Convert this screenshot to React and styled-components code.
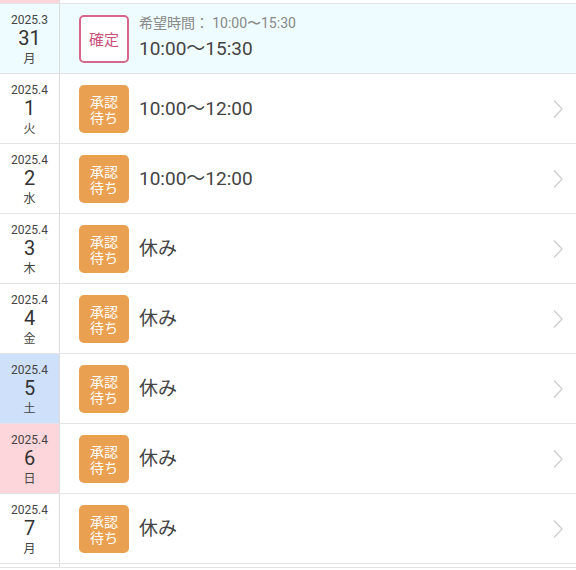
import React from "react";
import styled, { createGlobalStyle } from "styled-components";

const Global = createGlobalStyle`
  html, body { margin: 0; padding: 0; background: #fff; }
  body { font-family: Roboto, "Noto Sans CJK JP", sans-serif; color: #333; overflow: hidden; }
`;

const List = styled.div`
  display: flex;
  flex-direction: column;
  width: 576px;
  height: 570px;
  overflow: hidden;
`;

const Peek = styled.div`
  display: flex;
  height: 3px;
  border-bottom: 1px solid #e4e4e4;
  flex-shrink: 0;
`;

const PeekDate = styled.div`
  width: 59px;
  border-right: 1px solid #dcdcdc;
  background: ${(p) => p.$bg};
`;

const Row = styled.div`
  display: flex;
  height: 69px;
  border-bottom: 1px solid #e4e4e4;
  background: ${(p) => (p.$confirmed ? "#effcff" : "#fff")};
  flex-shrink: 0;
`;

const DateCell = styled.div`
  width: 59px;
  border-right: 1px solid #dcdcdc;
  background: ${(p) => p.$bg};
  display: flex;
  flex-direction: column;
  align-items: center;
  justify-content: center;
  flex-shrink: 0;
`;

const Ym = styled.div`
  font-size: 12px;
  line-height: 14px;
  color: #444;
`;

const Day = styled.div`
  font-size: 20px;
  line-height: 23px;
  color: #333;
`;

const Dow = styled.div`
  font-size: 12px;
  line-height: 15px;
  color: #444;
  font-family: "Noto Sans CJK JP", sans-serif;
`;

const Body = styled.div`
  flex: 1;
  display: flex;
  align-items: center;
  padding-left: 19px;
  padding-right: 12px;
  gap: 10px;
`;

const Badge = styled.div`
  width: 50px;
  height: 48px;
  box-sizing: border-box;
  border-radius: 5px;
  display: flex;
  flex-direction: column;
  align-items: center;
  justify-content: center;
  text-align: center;
  font-family: "Noto Sans CJK JP", sans-serif;
  flex-shrink: 0;
  ${(p) =>
    p.$kind === "confirmed"
      ? `background: #fff; border: 2.5px solid #d4678a; color: #c9507a; font-size: 15px;`
      : `background: #e9a050; color: #fff; font-size: 14px;`}
`;

const BadgeLine = styled.span`
  display: block;
  line-height: 16px;
`;

const Texts = styled.div`
  flex: 1;
  display: flex;
  flex-direction: column;
  justify-content: center;
  padding-bottom: ${(p) => (p.$two ? "3px" : "0")};
`;

const Sub = styled.div`
  font-size: 14px;
  line-height: 18px;
  margin-bottom: 4px;
  color: #888;
  font-family: "Noto Sans CJK JP", sans-serif;
  span { font-family: Roboto, sans-serif; }
`;

const Main = styled.div`
  font-size: 19px;
  line-height: 26px;
  color: #444;
  font-family: Roboto, "Noto Sans CJK JP", sans-serif;
`;

const Chevron = () => (
  <svg width="12" height="20" viewBox="0 0 12 20" style={{ flexShrink: 0 }}>
    <path d="M2 1.5 L10 10 L2 18.5" fill="none" stroke="#cfcfcf" strokeWidth="1.4" />
  </svg>
);

const rows = [
  { ym: "2025.3", d: "31", w: "月", bg: "#effcff", kind: "confirmed", text: "10:00〜15:30", sub: "10:00〜15:30" },
  { ym: "2025.4", d: "1", w: "火", bg: "#fff", kind: "pending", text: "10:00〜12:00" },
  { ym: "2025.4", d: "2", w: "水", bg: "#fff", kind: "pending", text: "10:00〜12:00" },
  { ym: "2025.4", d: "3", w: "木", bg: "#fff", kind: "pending", text: "休み" },
  { ym: "2025.4", d: "4", w: "金", bg: "#fff", kind: "pending", text: "休み" },
  { ym: "2025.4", d: "5", w: "土", bg: "#cfe0fb", kind: "pending", text: "休み" },
  { ym: "2025.4", d: "6", w: "日", bg: "#fcd6da", kind: "pending", text: "休み" },
  { ym: "2025.4", d: "7", w: "月", bg: "#fff", kind: "pending", text: "休み" },
];

export default function App() {
  return (
    <>
      <Global />
      <List>
        <Peek>
          <PeekDate $bg="#fcd6da" />
        </Peek>
        {rows.map((r, i) => (
          <Row key={i} $confirmed={r.kind === "confirmed"}>
            <DateCell $bg={r.bg}>
              <Ym>{r.ym}</Ym>
              <Day>{r.d}</Day>
              <Dow>{r.w}</Dow>
            </DateCell>
            <Body>
              {r.kind === "confirmed" ? (
                <Badge $kind="confirmed">確定</Badge>
              ) : (
                <Badge $kind="pending">
                  <BadgeLine>承認</BadgeLine>
                  <BadgeLine>待ち</BadgeLine>
                </Badge>
              )}
              <Texts $two={!!r.sub}>
                {r.sub && (
                  <Sub>
                    希望時間： <span>{r.sub}</span>
                  </Sub>
                )}
                <Main>{r.text}</Main>
              </Texts>
              {r.kind !== "confirmed" && <Chevron />}
            </Body>
          </Row>
        ))}
        <Peek>
          <PeekDate $bg="#fff" />
        </Peek>
      </List>
    </>
  );
}
